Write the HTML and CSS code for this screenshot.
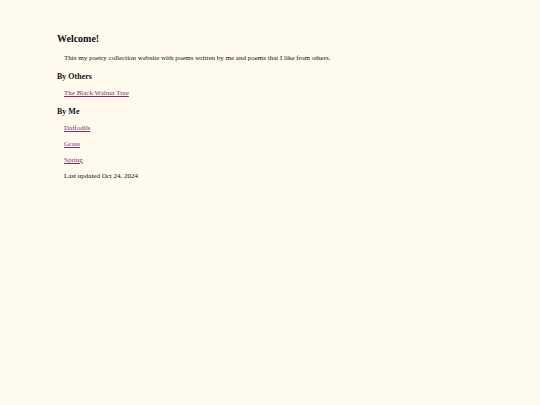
FILE: index.html
```html
<!DOCTYPE html>
<html lang="en">
<head>
  <meta charset="UTF-8">
  <title>Poetry</title>
  <link rel="stylesheet" href="styles.css">
</head>
<body>
  <h1>Welcome!</h1>
  <p>This my poetry collection website with poems written by me and poems that I like from others.</p>
  <h2>By Others</h2>
  <p><a href="#walnut">The Black Walnut Tree</a></p>
  <h2>By Me</h2>
  <p><a href="#daffodils">Daffodils</a></p>
  <p><a href="#grass">Grass</a></p>
  <p><a href="#spring">Spring</a></p>
  <p>Last updated Oct 24, 2024</p>
</body>
</html>
```
FILE: styles.css
```css
body {
  margin: 33px 57px;
  background-color: #fffaee;
  color: #111;
  font-family: "Liberation Serif", serif;
  font-size: 7px;
  line-height: 9px;
}
h1 {
  margin: 0 0 9px;
  font-size: 10px;
  line-height: 12px;
}
h2 {
  margin: 9px 0 8px;
  font-size: 8px;
}
p {
  margin: 7px 0 7px 7px;
}
a {
  color: #862d66;
}
```
